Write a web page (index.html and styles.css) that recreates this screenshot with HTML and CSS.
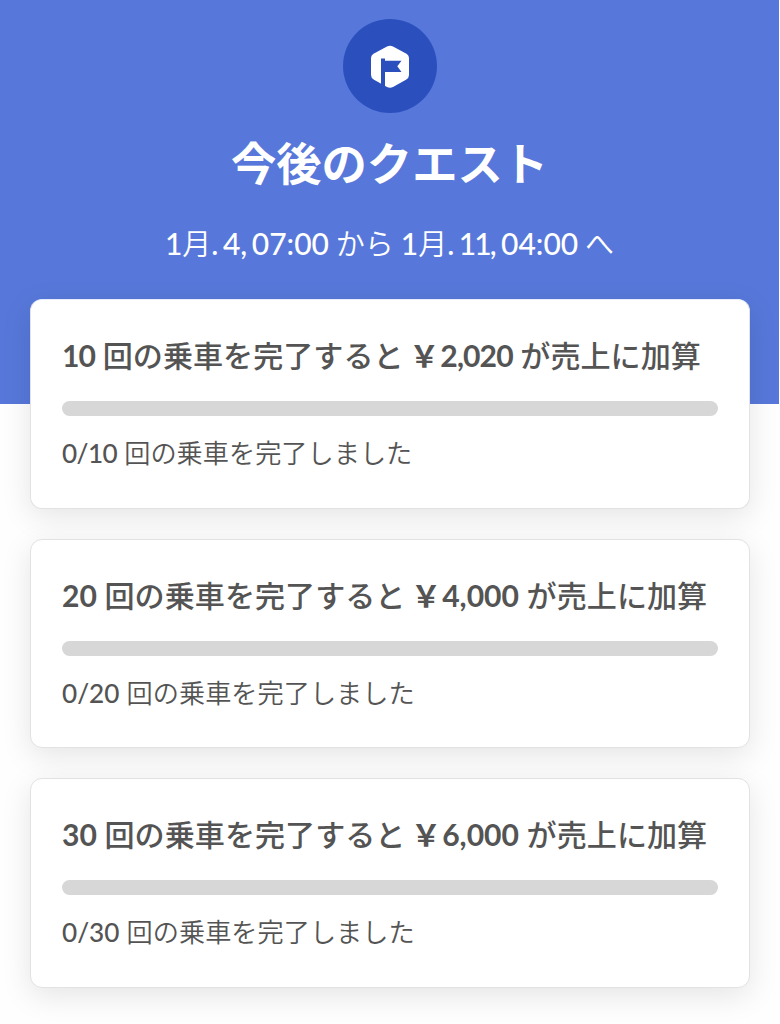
FILE: index.html
```html
<!DOCTYPE html>
<html lang="ja">

<head>
  <meta charset="UTF-8">
  <meta name="viewport" content="width=device-width, initial-scale=1.0">
  <title>今後のクエスト</title>
  <link rel="stylesheet" href="styles.css">
</head>

<body>
  <header class="hero">
    <div class="hero-icon">
      <svg width="40" height="44" viewBox="0 0 40 44">
        <path fill="#fff" d="M17 1.5Q20 0 23 1.5L36 8.6Q39 10.3 39 13.5V30Q39 33 36 34.8L23 42Q20 43.5 17 42L4 34.8Q1 33 1 30V13.5Q1 10.3 4 8.6Z"/>
        <path fill="#2b50be" d="M11 13.5H15V15.7H31.5L27.3 21.3L31.5 27H15V43L11 40Z"/>
      </svg>
    </div>
    <h1>今後のクエスト</h1>
    <p class="period"><span class="num">1</span>月<span class="num">. 4, 07:00</span> から <span class="num">1</span>月<span class="num">. <span class="tight">11</span>, 04:00</span> へ</p>
  </header>

  <main class="quests">
    <section class="card">
      <h2><span class="num tight">10</span> 回の乗車を完了すると <span class="yen">￥</span><span class="num tight">2,020</span> が売上に加算</h2>
      <div class="progress"></div>
      <p class="status"><span class="num tight">0/10</span> 回の乗車を完了しました</p>
    </section>
    <section class="card">
      <h2><span class="num">20</span> 回の乗車を完了すると <span class="yen">￥</span><span class="num">4,000</span> が売上に加算</h2>
      <div class="progress"></div>
      <p class="status"><span class="num">0/20</span> 回の乗車を完了しました</p>
    </section>
    <section class="card">
      <h2><span class="num">30</span> 回の乗車を完了すると <span class="yen">￥</span><span class="num">6,000</span> が売上に加算</h2>
      <div class="progress"></div>
      <p class="status"><span class="num">0/30</span> 回の乗車を完了しました</p>
    </section>
  </main>
</body>

</html>
```
FILE: styles.css
```css
* {
  box-sizing: border-box;
  margin: 0;
  padding: 0;
}

body {
  background-color: #fefefe;
  font-family: Lato, "Noto Sans CJK JP", sans-serif;
  color: #545454;
  height: 1024px;
  overflow: hidden;
}

.hero {
  height: 404px;
  margin-right: 1px;
  padding-top: 19px;
  background-color: #5778da;
  color: #fff;
  text-align: center;
}

.hero-icon {
  display: flex;
  justify-content: center;
  align-items: center;
  width: 94px;
  height: 94px;
  margin: 0 auto;
  padding-top: 1px;
  border-radius: 50%;
  background-color: #2b50be;
}

h1 {
  margin-top: 21px;
  font-size: 45.3px;
  font-weight: 700;
  line-height: 60px;
}

.period {
  margin-top: 29px;
  font-size: 29px;
  font-weight: 350;
  line-height: 40px;
  white-space: nowrap;
  word-spacing: -1px;
}

.period .num {
  font-size: 30px;
  font-weight: 500;
  word-spacing: -3px;
}

.period .tight {
  letter-spacing: -2px;
}

.quests {
  display: flex;
  flex-direction: column;
  gap: 30px;
  margin-top: -104.6px;
  padding: 0 30px;
}

.card {
  height: 209.4px;
  padding: 35px 31px 0;
  border: 1.5px solid #e2e2e2;
  border-radius: 12px;
  background-color: #fff;
  box-shadow: 0 8px 30px rgba(0, 0, 0, 0.1);
}

.card:first-child {
  border-top-color: #e6ecfc;
}

h2 {
  font-size: 30.1px;
  font-weight: 500;
  line-height: 40px;
  white-space: nowrap;
}

h2 .num {
  font-weight: 700;
}

h2 .tight {
  letter-spacing: -0.9px;
}

h2 .yen {
  margin: 0 1px 0 -2px;
  font-weight: 700;
}

.progress {
  height: 15px;
  margin-top: 26px;
  border-radius: 8px;
  background-color: #d7d7d7;
}

.status {
  margin-top: 19px;
  font-size: 26.2px;
  font-weight: 350;
  line-height: 36px;
}

.status .num {
  font-weight: 500;
}

.status .tight {
  letter-spacing: -0.6px;
}
```
